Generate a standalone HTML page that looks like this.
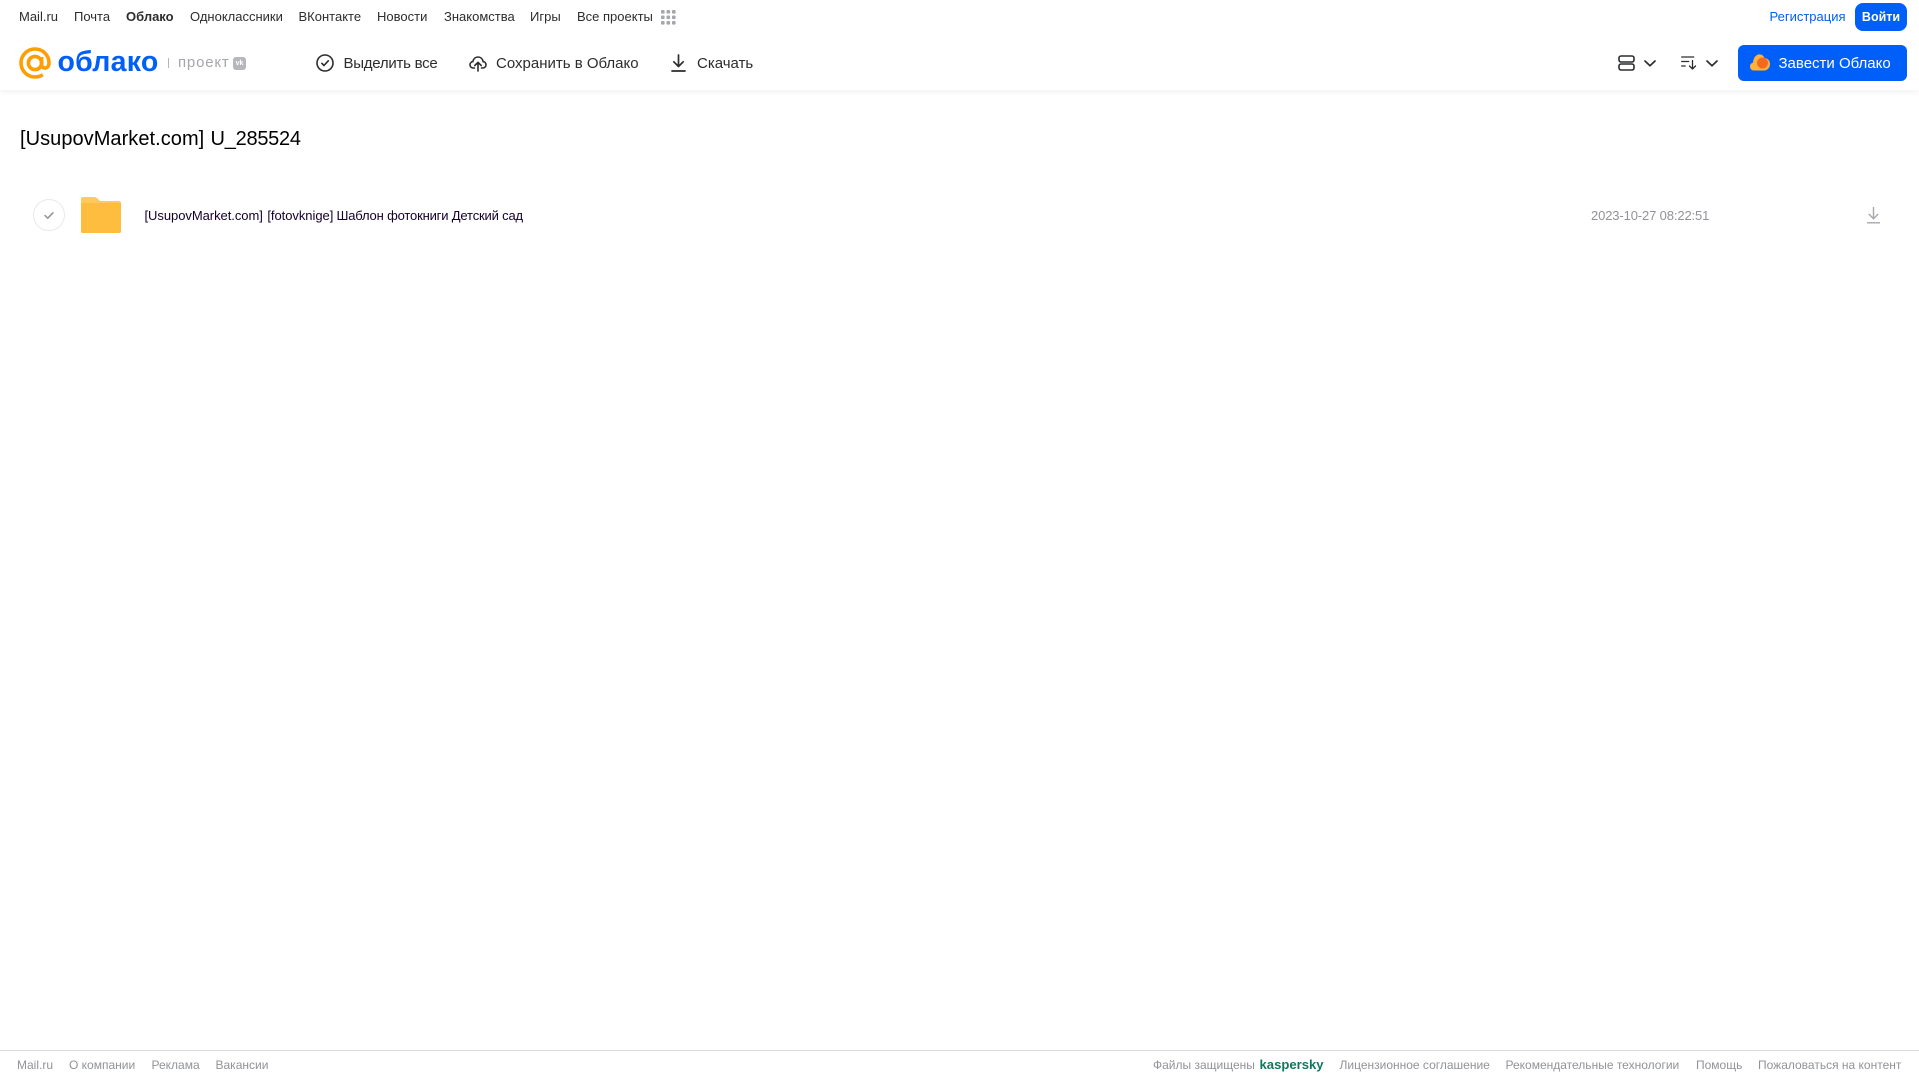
<!DOCTYPE html>
<html lang="ru"><head><meta charset="utf-8"><title>Облако</title>
<style>
html,body{margin:0;padding:0;background:#fff;width:1919px;height:1079px;overflow:hidden}
body{position:relative;font-family:"Liberation Sans",Arial,sans-serif}
.t{position:absolute;white-space:nowrap;line-height:20px;height:20px}
.n{font-size:13px;color:#2c2d2e;top:7px}
.b{font-size:15px;color:#2c2d2e;top:54px;letter-spacing:0}
.f{font-size:12px;color:#919399;top:1055px;letter-spacing:0}
svg{position:absolute;overflow:visible}
#hdr{position:absolute;left:0;top:0;width:1919px;height:90px;background:#fff;box-shadow:0 2px 6px rgba(0,0,0,.06)}
</style></head><body>
<div id="hdr"></div>
<span class="t n" style="left:19px">Mail.ru</span>
<span class="t n" style="left:74px">Почта</span>
<span class="t n" style="left:126px;font-weight:700">Облако</span>
<span class="t n" style="left:190px">Одноклассники</span>
<span class="t n" style="left:298.500px">ВКонтакте</span>
<span class="t n" style="left:377px">Новости</span>
<span class="t n" style="left:444px">Знакомства</span>
<span class="t n" style="left:530px">Игры</span>
<span class="t n" style="left:577px">Все проекты</span>
<svg style="left:661px;top:10px" width="15" height="15" fill="#a5a7ab"><rect x="0" y="0" width="3.6" height="3.6" rx="1"/><rect x="5.5" y="0" width="3.6" height="3.6" rx="1"/><rect x="11" y="0" width="3.6" height="3.6" rx="1"/><rect x="0" y="5.5" width="3.6" height="3.6" rx="1"/><rect x="5.5" y="5.5" width="3.6" height="3.6" rx="1"/><rect x="11" y="5.5" width="3.6" height="3.6" rx="1"/><rect x="0" y="11" width="3.6" height="3.6" rx="1"/><rect x="5.5" y="11" width="3.6" height="3.6" rx="1"/><rect x="11" y="11" width="3.6" height="3.6" rx="1"/></svg>
<span class="t" style="left:1769.500px;top:7px;font-size:13px;color:#005ff9">Регистрация</span>
<div style="position:absolute;left:1855px;top:3px;width:52px;height:28px;border-radius:8px;background:#005ff9;color:#fff;font-size:12.500px;font-weight:700;line-height:28px;text-align:center">Войти</div>

<svg style="left:19px;top:47px" width="32" height="33" viewBox="0 0 32 33" fill="none" stroke="#ff9e00" stroke-width="3.600"><circle cx="16" cy="16" r="6.6"/><path d="M22.6 10v7.5c0 5 7.4 5 7.4-1.5C30 8 23.700 2 16 2S2 8.300 2 16s6.300 14 14 14c3 0 5.500-.7 7.800-2.200"/></svg>
<span class="t" style="left:57.500px;top:45px;height:34px;line-height:34px;font-size:28.500px;font-weight:700;color:#005ff9;letter-spacing:.25px">облако</span>
<div style="position:absolute;left:168px;top:58px;width:1px;height:10px;background:#b5b7bb"></div>
<span class="t" style="left:178px;top:53px;font-size:15px;color:#a5a7ab;letter-spacing:.8px">проект</span>
<div style="position:absolute;left:233px;top:57px;width:13px;height:13px;border-radius:3px;background:#b5b7bb;color:#fff;font-size:7px;font-weight:700;line-height:13px;text-align:center">vk</div>

<svg style="left:316px;top:54px" width="18" height="18" viewBox="0 0 18 18" fill="none" stroke="#2c2d2e" stroke-width="1.600" stroke-linecap="round" stroke-linejoin="round"><circle cx="9" cy="9" r="8"/><path d="M5.800 9.300l2.200 2.200 4.300-4.700"/></svg>
<span class="t b" style="left:343.500px;letter-spacing:-.25px">Выделить все</span>
<svg style="left:469px;top:54px" width="18" height="18" viewBox="0 0 18 18" fill="none" stroke="#2c2d2e" stroke-width="1.600" stroke-linecap="round" stroke-linejoin="round"><path d="M5.500 14H4.300C2.400 14 1 12.600 1 10.800c0-1.700 1.200-3 2.900-3.200C4.400 4.800 6.500 3 9 3s4.600 1.800 5.100 4.600c1.700.2 2.900 1.500 2.900 3.200 0 1.800-1.400 3.200-3.300 3.200h-1.200"/><path d="M9 17V8.500M5.800 11.500L9 8.300l3.200 3.200"/></svg>
<span class="t b" style="left:496px">Сохранить в Облако</span>
<svg style="left:671px;top:54px" width="15" height="18" viewBox="0 0 15 18" fill="none" stroke="#2c2d2e" stroke-width="1.700" stroke-linecap="round" stroke-linejoin="round"><path d="M7.500 1v11M2.800 7.800l4.700 4.700 4.700-4.700M1 17h13"/></svg>
<span class="t b" style="left:697px">Скачать</span>

<svg style="left:1618px;top:55px" width="17" height="16" viewBox="0 0 17 16" fill="none" stroke="#2c2d2e" stroke-width="1.600"><rect x="1" y="1" width="15" height="6" rx="2"/><rect x="1" y="9" width="15" height="6" rx="2"/></svg>
<svg style="left:1644px;top:60px" width="12" height="7" viewBox="0 0 12 7" fill="none" stroke="#2c2d2e" stroke-width="1.700" stroke-linecap="round" stroke-linejoin="round"><path d="M1 1l5 4.800L11 1"/></svg>
<svg style="left:1681px;top:56px" width="16" height="14" viewBox="0 0 16 14" fill="none" stroke="#2c2d2e" stroke-width="1.300" stroke-linecap="round" stroke-linejoin="round"><path d="M.7 1h12M.7 5.500h7M.7 10h3.500M11.500 4.500v8.500M8.500 10l3 3 3-3"/></svg>
<svg style="left:1706px;top:60px" width="12" height="7" viewBox="0 0 12 7" fill="none" stroke="#2c2d2e" stroke-width="1.700" stroke-linecap="round" stroke-linejoin="round"><path d="M1 1l5 4.800L11 1"/></svg>

<div style="position:absolute;left:1738px;top:45px;width:169px;height:36px;border-radius:6px;background:#005ff9"></div>
<svg style="left:1750px;top:54px" width="20" height="17" viewBox="0 0 20 17"><path d="M4 16.500C1.700 16.500 0 14.800 0 12.500c0-2 1.300-3.500 3-3.900C3.300 4 5.700 1 8.500.5c2.800-.5 5 1 6 3.500 3 .3 5.500 2.500 5.500 6 0 3.800-2.800 6.500-6 6.500z" fill="#ffb13d"/><circle cx="12.500" cy="9" r="5.500" fill="#f5691f"/></svg>
<span class="t" style="left:1778.500px;top:53.500px;font-size:15px;color:#fff;letter-spacing:0">Завести Облако</span>

<span class="t" style="left:20px;top:125.500px;height:26px;line-height:26px;font-size:20px;color:#000;letter-spacing:.05px">[UsupovMarket.com]</span>
<span class="t" style="left:210.500px;top:125.500px;height:26px;line-height:26px;font-size:20px;color:#000;letter-spacing:-.25px">U_285524</span>
<svg style="left:33px;top:199px" width="32" height="32" viewBox="0 0 32 32" fill="none"><circle cx="16" cy="16" r="15.500" stroke="#e8e9ec"/><path d="M12 16.500l2.800 2.700 5.200-5.400" stroke="#919399" stroke-width="1.500" stroke-linecap="round" stroke-linejoin="round"/></svg>
<svg style="left:81px;top:197px" width="40" height="36" viewBox="0 0 40 36"><path d="M2 0h11c2 0 3 1 4 2l2 2h19c1.200 0 2 .8 2 2v28c0 1.200-.8 2-2 2H2c-1.200 0-2-.8-2-2V2C0 .8.800 0 2 0z" fill="#ffc95f"/><path d="M0 6h38c1.200 0 2 .8 2 2v26c0 1.200-.8 2-2 2H2c-1.200 0-2-.8-2-2z" fill="#ffbd3f"/></svg>
<span class="t" style="left:144.500px;top:206px;font-size:13px;color:#14002b;letter-spacing:-.05px;word-spacing:1px">[UsupovMarket.com] [fotovknige]</span>
<span class="t" style="left:336.500px;top:206px;font-size:13px;color:#14002b;letter-spacing:-.17px">Шаблон фотокниги Детский сад</span>
<span class="t" style="left:1591px;top:206px;font-size:13px;color:#919399;letter-spacing:-.13px">2023-10-27 08:22:51</span>
<svg style="left:1867px;top:207px" width="13" height="17" viewBox="0 0 13 17" fill="none" stroke="#a5a7ab" stroke-width="1.400"><path d="M6.500 0v11.500M1.800 7l4.700 4.700L11.200 7M0 15.800h13"/></svg>

<div style="position:absolute;left:0;top:1050px;width:1919px;height:1px;background:#dcdde0"></div>
<span class="t f" style="left:17px">Mail.ru</span>
<span class="t f" style="left:69px">О компании</span>
<span class="t f" style="left:151.500px">Реклама</span>
<span class="t f" style="left:215.500px">Вакансии</span>
<span class="t f" style="left:1153px">Файлы защищены</span>
<span class="t f" style="left:1259.500px;font-size:13.100px;font-weight:700;color:#10795f">kaspersky</span>
<span class="t f" style="left:1339.500px">Лицензионное соглашение</span>
<span class="t f" style="left:1505.500px">Рекомендательные технологии</span>
<span class="t f" style="left:1696px">Помощь</span>
<span class="t f" style="left:1758px">Пожаловаться на контент</span>
</body></html>
